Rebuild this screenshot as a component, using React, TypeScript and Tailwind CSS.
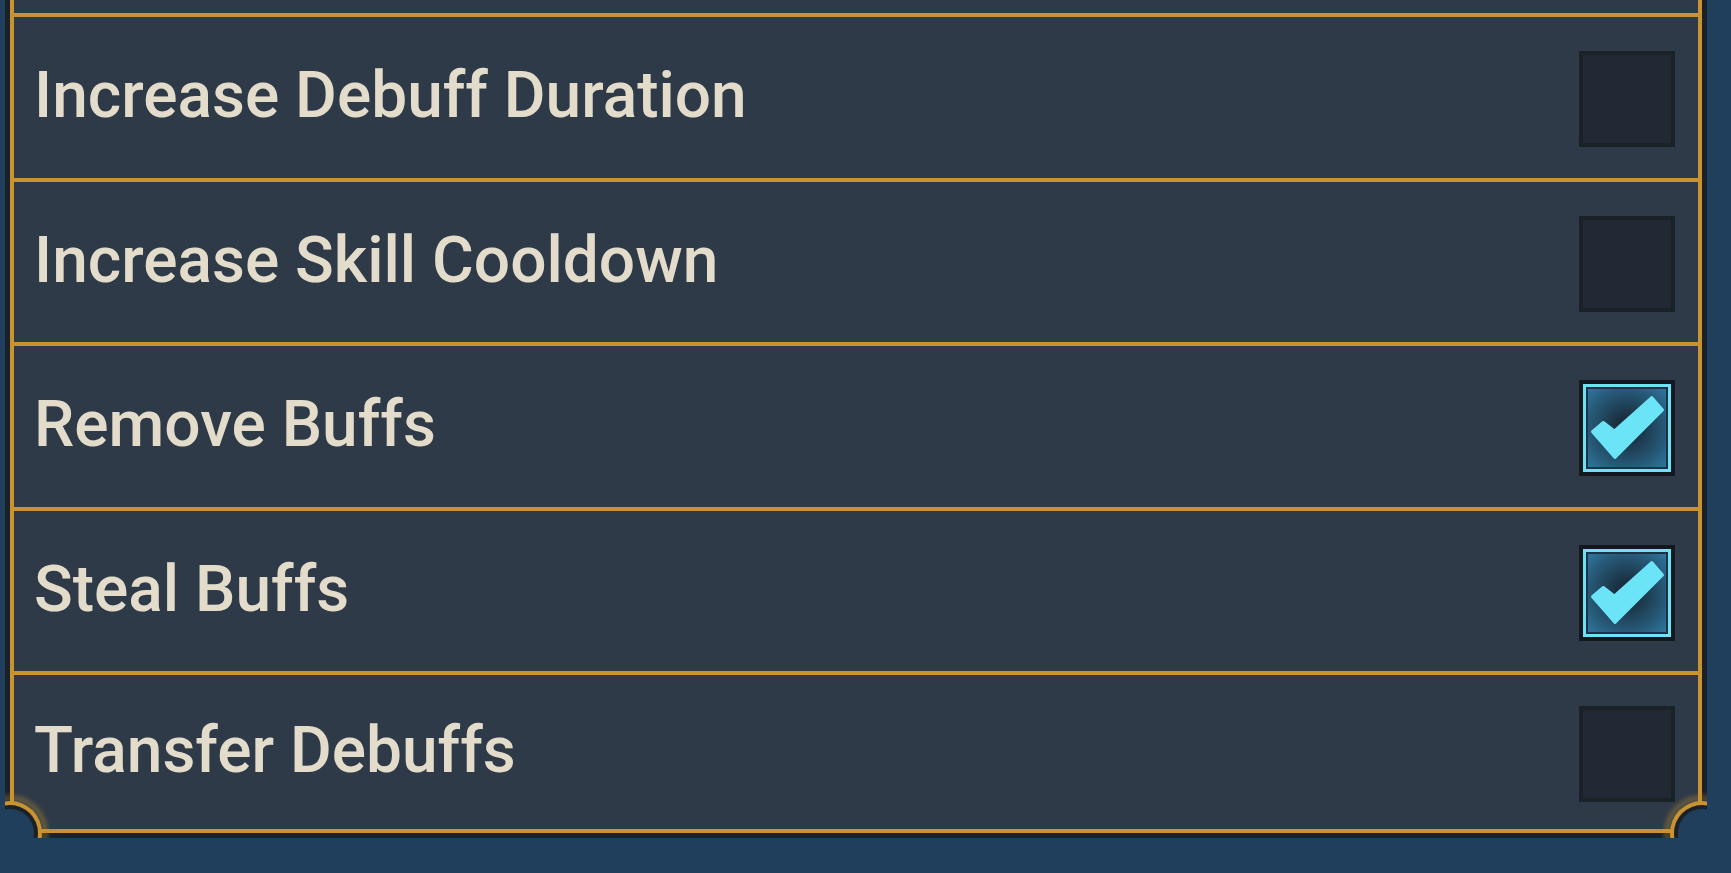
import React from 'react';

type Option = {
  label: string;
  checked: boolean;
  height: string;
};

const options: Option[] = [
  { label: 'Increase Debuff Duration', checked: false, height: 'h-[165px]' },
  { label: 'Increase Skill Cooldown', checked: false, height: 'h-[164px]' },
  { label: 'Remove Buffs', checked: true, height: 'h-[165px]' },
  { label: 'Steal Buffs', checked: true, height: 'h-[164px]' },
  { label: 'Transfer Debuffs', checked: false, height: 'h-[158px]' },
];

function CheckBox({ checked }: { checked: boolean }) {
  if (!checked) {
    return <div className="mt-[3px] h-[96px] w-[96px] shrink-0 border-4 border-[#1a2127] bg-[#212a34]" />;
  }

  return (
    <div className="relative mt-[3px] h-[96px] w-[96px] shrink-0 border-4 border-[#12181d]">
      <div className="h-full w-full border-[3px] border-[#6de2f6]">
        <div className="h-full w-full border-2 border-[#1b3344] bg-[radial-gradient(circle,#1a3040_20%,#275a78_70%,#3076a0_100%)]" />
      </div>
      {/* check mark */}
      <svg viewBox="0 0 96 96" className="absolute -inset-[4px] h-[96px] w-[96px]">
        <polygon
          points="13.5,51.7 24.3,42.5 35.3,51 72.7,17.5 83.5,30 36,77.5"
          fill="#6ce4f7"
          stroke="#6ce4f7"
          strokeWidth="3"
          strokeLinejoin="round"
        />
      </svg>
    </div>
  );
}

function CornerNotch({ side }: { side: 'left' | 'right' }) {
  const cx = side === 'left' ? 5 : 45;
  return (
    <svg
      viewBox="0 0 50 50"
      className={`absolute bottom-0 h-[50px] w-[50px] ${side === 'left' ? 'left-0' : 'right-0'}`}
    >
      <defs>
        <filter id={`glow-${side}`} x="-50%" y="-50%" width="200%" height="200%">
          <feGaussianBlur stdDeviation="2" />
        </filter>
      </defs>
      <circle cx={cx} cy={45} r={35} fill="none" stroke="#c9932f" strokeOpacity="0.35" strokeWidth="6" filter={`url(#glow-${side})`} />
      <circle cx={cx} cy={45} r={32} fill="#c9932f" />
      <circle cx={cx} cy={45} r={28} fill="#1a2129" />
      <circle cx={cx} cy={45} r={24} fill="#1f3f5d" />
    </svg>
  );
}

export default function App() {
  return (
    <div className="h-[873px] w-full overflow-hidden bg-[#1f3f5d] font-[Roboto,sans-serif]">
      <div className="relative ml-[5px] w-[1702px] bg-[#1a2129] px-[5px] pb-[5px]">
        <div className="border-x-4 border-b-4 border-[#c9932f] bg-[#2e3a48]">
          {/* tail of the row above, scrolled out of view */}
          <div className="h-[13px]" />

          {options.map((opt) => (
            <div
              key={opt.label}
              className={`flex items-center justify-between border-t-4 border-[#c9932f] pl-[20px] pr-[23px] ${opt.height}`}
            >
              <span className="mb-[3px] text-[64px] font-medium leading-none text-[#e4dccb]">
                {opt.label}
              </span>
              <CheckBox checked={opt.checked} />
            </div>
          ))}
        </div>

        <CornerNotch side="left" />
        <CornerNotch side="right" />
      </div>
    </div>
  );
}
